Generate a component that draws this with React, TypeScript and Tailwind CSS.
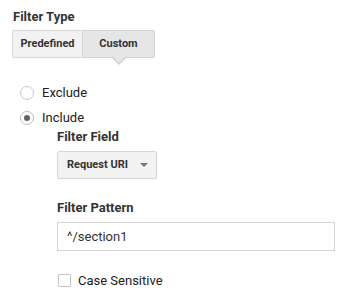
import React from "react";

export default function App() {
  return (
    <div className="w-[354px] h-[301px] bg-white text-[#212121] font-['Roboto',sans-serif] relative overflow-hidden">
      <div className="pl-[13px] pt-[9px]">
        <div className="text-[13px] font-bold leading-[16px] text-[#333]">Filter Type</div>
        <div className="mt-[5px] ml-[-1px] flex h-[28px] w-[143px]">
          <div className="w-[71px] flex items-center justify-center border border-[#d6d6d6] bg-[#f2f2f2] rounded-l-[2px] text-[11px] font-bold text-[#333]">
            Predefined
          </div>
          <div className="relative w-[72px] flex items-center justify-center border border-l-0 border-[#d0d0d0] bg-[#e6e6e6] rounded-r-[2px] text-[11px] font-bold text-[#333]">
            Custom
            <div className="absolute left-1/2 -translate-x-1/2 top-full w-0 h-0 border-l-[8px] border-r-[8px] border-t-[8px] border-l-transparent border-r-transparent border-t-[#d0d0d0]">
              <div className="absolute left-[-7px] top-[-9px] w-0 h-0 border-l-[7px] border-r-[7px] border-t-[7px] border-l-transparent border-r-transparent border-t-[#e6e6e6]"></div>
            </div>
          </div>
        </div>
      </div>
      <div className="pl-[20px] mt-[27px] flex flex-col">
        <div className="flex items-center h-[16px]">
          <div className="w-[14px] h-[14px] rounded-full border border-[#c8c8c8] bg-white"></div>
          <span className="ml-[8px] text-[13px] text-[#212121]">Exclude</span>
        </div>
        <div className="flex items-center h-[16px] mt-[9px]">
          <div className="w-[14px] h-[14px] rounded-full border border-[#bdbdbd] bg-white flex items-center justify-center">
            <div className="w-[6px] h-[6px] rounded-full bg-[#616161]"></div>
          </div>
          <span className="ml-[8px] text-[13px] text-[#212121]">Include</span>
        </div>
      </div>
      <div className="pl-[57px] mt-[3px] flex flex-col">
        <div className="text-[13px] font-bold leading-[16px] text-[#333]">Filter Field</div>
        <div className="mt-[6px] w-[100px] h-[28px] border border-[#d6d6d6] bg-[#f2f2f2] rounded-[2px] flex items-center pl-[9px] pr-[8px]">
          <span className="text-[11px] font-bold text-[#333] flex-1">Request URI</span>
          <svg width="8" height="4" viewBox="0 0 8 4"><path d="M0 0 L8 0 L4 4 Z" fill="#777" /></svg>
        </div>
        <div className="mt-[21px] text-[13px] font-bold leading-[16px] text-[#333]">Filter Pattern</div>
        <div className="mt-[6px] w-[278px] h-[29px] border border-[#d3d3d3] flex items-center pl-[9px] text-[13px] text-[#333]">
          ^/section1
        </div>
        <div className="mt-[20px] flex items-center">
          <div className="w-[13px] h-[13px] border border-[#c4c4c4] bg-white rounded-[1px] ml-[1px]"></div>
          <span className="ml-[7px] text-[13px] text-[#212121]">Case Sensitive</span>
        </div>
      </div>
    </div>
  );
}
